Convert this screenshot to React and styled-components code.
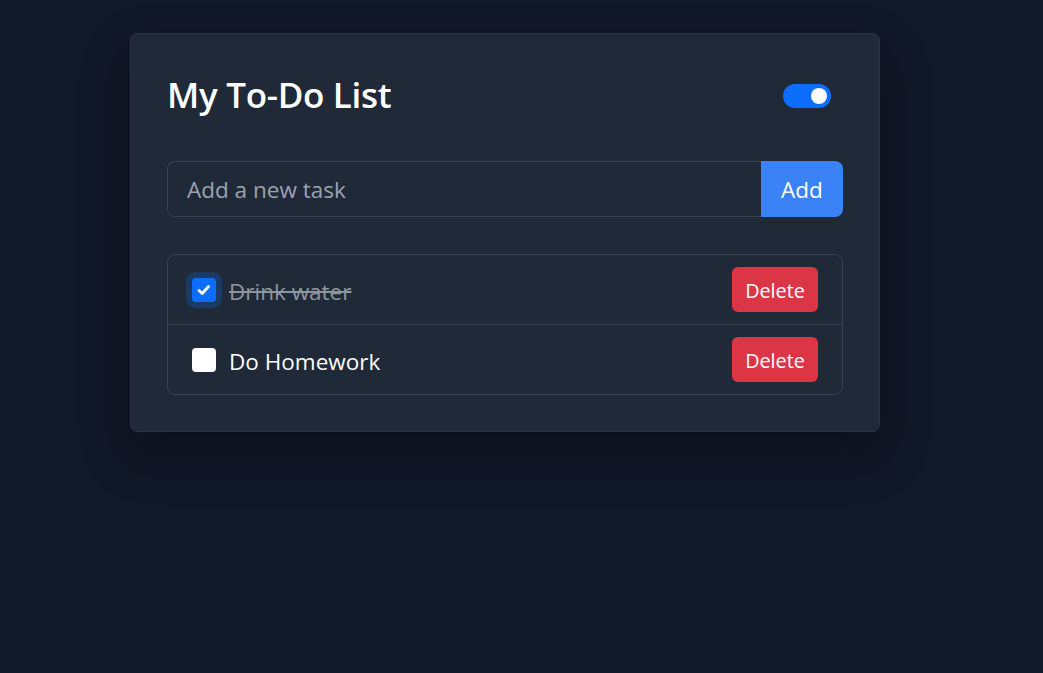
import React, { useState } from "react";
import styled, { createGlobalStyle } from "styled-components";

const GlobalStyle = createGlobalStyle`
  html, body {
    margin: 0;
    padding: 0;
    background: #111827;
    min-height: 100%;
  }
  body {
    font-family: "Open Sans", "Noto Sans", "Liberation Sans", sans-serif;
    color: #f9fafb;
  }
  * { box-sizing: border-box; }
`;

const Page = styled.div`
  min-height: 673px;
  padding: 33px 0 0 130px;
`;

const Card = styled.div`
  width: 750px;
  background: #1f2937;
  border: 1px solid #273244;
  border-radius: 7px;
  padding: 36px;
  box-shadow: 0 22px 50px rgba(0, 0, 0, 0.32);
`;

const Header = styled.div`
  display: flex;
  align-items: center;
  justify-content: space-between;
  height: 52px;
  margin-bottom: 39px;
`;

const Title = styled.h2`
  margin: 0 0 3px;
  font-size: 35px;
  font-weight: 600;
  color: #ffffff;
  letter-spacing: -0.3px;
`;

const Switch = styled.button`
  width: 48px;
  height: 24px;
  margin-right: 12px;
  border: none;
  padding: 0 4px;
  border-radius: 12px;
  background: ${(p) => (p.$on ? "#0d6efd" : "#4b5563")};
  display: flex;
  align-items: center;
  justify-content: ${(p) => (p.$on ? "flex-end" : "flex-start")};
  cursor: pointer;
`;

const Knob = styled.span`
  width: 16px;
  height: 16px;
  border-radius: 50%;
  background: #ffffff;
`;

const InputGroup = styled.form`
  display: flex;
  height: 56px;
  margin-bottom: 37px;
`;

const TaskInput = styled.input`
  flex: 1;
  min-width: 0;
  background: #1f2937;
  border: 1px solid #374151;
  border-right: none;
  border-radius: 8px 0 0 8px;
  padding: 1px 19px 0;
  font-family: inherit;
  font-size: 22.5px;
  color: #f9fafb;
  outline: none;

  &::placeholder {
    color: #9ca3af;
  }
`;

const AddButton = styled.button`
  width: 82px;
  border: none;
  border-radius: 0 8px 8px 0;
  background: #3b82f6;
  color: #ffffff;
  font-family: inherit;
  font-size: 22.5px;
  padding: 1px 0 0;
  cursor: pointer;
`;

const List = styled.ul`
  list-style: none;
  margin: 0;
  padding: 0;
  border: 1px solid #374151;
  border-radius: 8px;
`;

const Row = styled.li`
  display: flex;
  align-items: center;
  padding: 12px 24px;
  border-bottom: 1px solid #374151;

  &:last-child {
    border-bottom: none;
  }
`;

const Check = styled.span`
  width: 24px;
  height: 24px;
  flex: none;
  border-radius: 4px;
  display: flex;
  align-items: center;
  justify-content: center;
  background: ${(p) => (p.$checked ? "#0d6efd" : "#ffffff")};
  box-shadow: ${(p) =>
    p.$checked ? "0 0 0 6px rgba(13, 110, 253, 0.25)" : "none"};
  cursor: pointer;
`;

const Label = styled.span`
  flex: 1;
  margin-left: 13px;
  padding-top: 3px;
  font-size: 22.5px;
  color: ${(p) => (p.$done ? "#8f959e" : "#ffffff")};
  text-decoration: ${(p) => (p.$done ? "line-through" : "none")};
`;

const DeleteButton = styled.button`
  width: 86px;
  height: 45px;
  border: none;
  border-radius: 6px;
  padding: 2px 0 0;
  background: #dc3545;
  color: #ffffff;
  font-family: inherit;
  font-size: 19.8px;
  cursor: pointer;
`;

const CheckMark = () => (
  <svg width="16" height="16" viewBox="0 0 16 16" fill="none">
    <path
      d="M3 8.5l3.2 3 6.3-7"
      stroke="#fff"
      strokeWidth="2.8"
      strokeLinecap="round"
      strokeLinejoin="round"
    />
  </svg>
);

export default function App() {
  const [dark, setDark] = useState(true);
  const [tasks, setTasks] = useState([
    { id: 1, text: "Drink water", done: true },
    { id: 2, text: "Do Homework", done: false },
  ]);
  const [draft, setDraft] = useState("");

  const toggle = (id) =>
    setTasks((t) => t.map((x) => (x.id === id ? { ...x, done: !x.done } : x)));
  const remove = (id) => setTasks((t) => t.filter((x) => x.id !== id));
  const add = (e) => {
    e.preventDefault();
    if (!draft.trim()) return;
    setTasks((t) => [...t, { id: Date.now(), text: draft.trim(), done: false }]);
    setDraft("");
  };

  return (
    <>
      <GlobalStyle />
      <Page>
        <Card>
          <Header>
            <Title>My To-Do List</Title>
            <Switch $on={dark} onClick={() => setDark(!dark)}>
              <Knob />
            </Switch>
          </Header>
          <InputGroup onSubmit={add}>
            <TaskInput
              placeholder="Add a new task"
              value={draft}
              onChange={(e) => setDraft(e.target.value)}
            />
            <AddButton type="submit">Add</AddButton>
          </InputGroup>
          <List>
            {tasks.map((t) => (
              <Row key={t.id}>
                <Check $checked={t.done} onClick={() => toggle(t.id)}>
                  {t.done && <CheckMark />}
                </Check>
                <Label $done={t.done}>{t.text}</Label>
                <DeleteButton onClick={() => remove(t.id)}>Delete</DeleteButton>
              </Row>
            ))}
          </List>
        </Card>
      </Page>
    </>
  );
}
